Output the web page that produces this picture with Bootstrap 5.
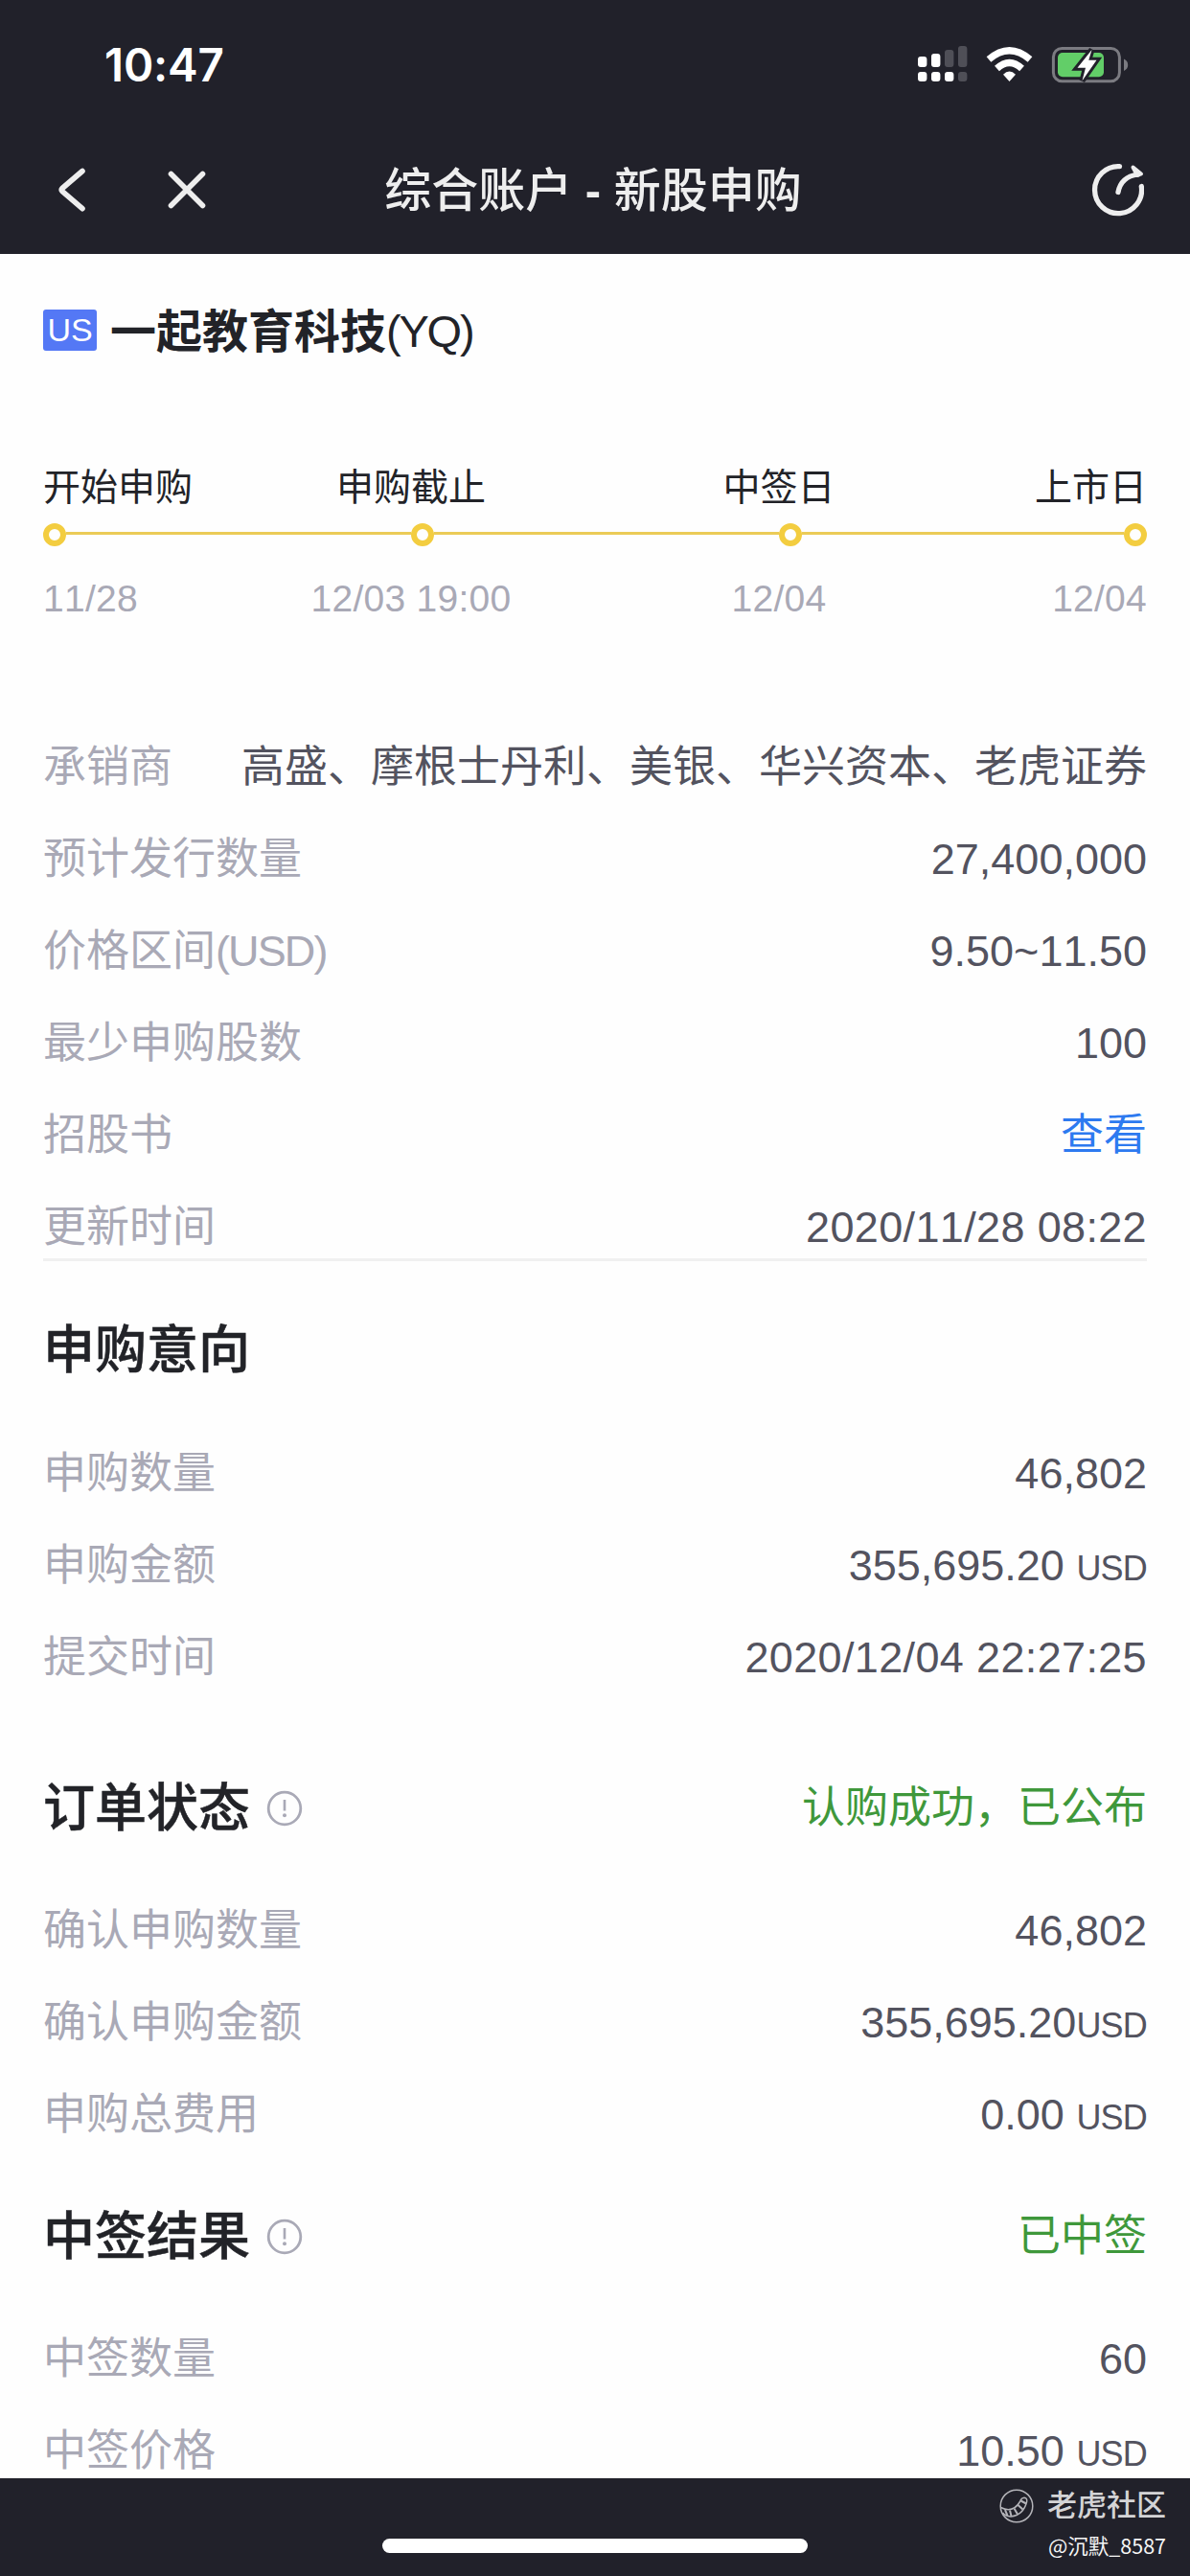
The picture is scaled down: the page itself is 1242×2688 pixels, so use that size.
<!DOCTYPE html>
<html lang="zh-CN">
<head>
<meta charset="utf-8">
<meta name="viewport" content="width=device-width, initial-scale=1">
<title>综合账户 - 新股申购</title>
<link href="https://cdn.jsdelivr.net/npm/bootstrap@5.3.0/dist/css/bootstrap.min.css" rel="stylesheet">
<style>
body{font-family:"Liberation Sans","Noto Sans CJK SC",sans-serif;background:#fefefe;color:#222328;font-kerning:none}
.screen{width:1242px;height:2688px}
.topbar{height:265px;background:#21212a;color:#eee}
.status{height:136px;padding:0 64px 0 109px}
.clock{font:600 47.500px/136px Inter,sans-serif;color:#fff;letter-spacing:-.2px}
.navrow{height:129px;padding:0 48px 5px 44px}
.navtitle{font-size:49px;font-weight:500;line-height:122px;padding-top:2px}
.navside{width:220px}
.back{margin-left:15px}
.sheet{padding:0 45px}
.stock{height:159px;line-height:159px;font-size:48px}
.mkt{width:56px;height:43px;line-height:43px;font-size:34px;background:#5478f5;color:#fff;border-radius:3px;margin-right:14px}
.stock-name{font-weight:700;padding-top:3px}
.sym{letter-spacing:-2.2px;font-size:47px;padding-top:1px}
.steps{margin-top:64px;font-size:39px}
.steps .c1{width:192px}.steps .c2{width:384px}
.steps-label{line-height:40px;padding-top:1px}
.steps-date{line-height:40px;margin-top:35px;color:#a9a9b6;letter-spacing:.25px}
.track{height:24px;margin-top:17px}
.dot{width:24px;height:24px;border:6px solid #f3cd40;border-radius:50%}
.bar{height:3px;background:#ebcb57;margin-bottom:3px}
.bar-full{width:360px}
.kv{height:96px;line-height:96px;font-size:45px;color:#53535f}
.kv dt{font-weight:400;color:#a9a9b6}
.kv dd{margin:0}
.kv .when{letter-spacing:.35px}
.unit{letter-spacing:-1.9px}
.usd{font-size:36px;letter-spacing:-.8px}
.facts{padding-top:108px}
.rule{height:3px;background:#f0f0f0;margin-top:-16px}
.intent{padding-top:52px}.order{padding-top:68px}.result{padding-top:38px}
.rows{padding-top:39px}
.intent .rows{padding-top:40px}
.head{height:82px;line-height:82px}
.head h2{font-size:54px;font-weight:500;line-height:82px;margin:0;-webkit-text-stroke:.5px #222328}
.head .tip{margin-left:17px}
.ok{font-size:45px;color:#3f983b}
.lnk{color:#2d7af0}
.foot{height:102px;background:#21212a;color:#fff}
.home{width:444px;height:15px;border-radius:8px;background:#fff;left:399px;top:63px}
.brand{font-size:31px;font-weight:500;line-height:40px;color:#d4d4d6}
.brand svg{margin-right:14px}
.user{font:400 21.500px/28px "Noto Sans CJK SC",sans-serif;color:#f6f6f6;margin-top:7px}
.wm{padding:9px 25px 0 0}
</style>
<script src="https://cdn.jsdelivr.net/npm/bootstrap@5.3.0/dist/js/bootstrap.bundle.min.js"></script>
</head>
<body>
<div class="screen d-flex flex-column overflow-hidden">
  <header class="topbar flex-shrink-0">
    <div class="status d-flex justify-content-between align-items-center">
      <span class="clock">10:47</span>
      <svg width="222" height="44" viewBox="956 46 222 44">
        <g fill="#fff"><rect x="958" y="59" width="9.4" height="11" rx="3"/><rect x="972" y="56" width="9.4" height="14" rx="3"/><rect x="958" y="75" width="9.4" height="10" rx="3"/><rect x="972" y="75" width="9.4" height="10" rx="3"/><rect x="986" y="75" width="9.4" height="10" rx="3"/></g>
        <g fill="#4f4f57"><rect x="986" y="52" width="9.4" height="18" rx="3"/><rect x="1000" y="48" width="9.4" height="22" rx="3"/><rect x="1000" y="75" width="9.4" height="10" rx="3"/></g>
        <g fill="none" stroke="#fff" stroke-width="7.2"><path d="M1032 62Q1053.500 43.500 1075 62"/><path d="M1040.500 71.500Q1053.500 59.500 1066.500 71.500"/></g>
        <path fill="#fff" d="M1053.500 85l-6.500-7.200q6.500-6.500 13 0z"/>
        <rect x="1099.400" y="50.400" width="69" height="34.400" rx="9" fill="none" stroke="#7b7b81" stroke-width="3"/>
        <path fill="#7b7b81" d="M1173 61.500q4.200 2 4.200 6.200t-4.200 6.200z"/>
        <rect x="1104" y="55" width="48" height="25.200" rx="5" fill="#62ce68"/>
        <path d="M1139.500 52l-15 18.700h8.500l-3.500 13.500 15-21.500h-8.200z" fill="#fff" stroke="#21212a" stroke-width="6" paint-order="stroke"/>
      </svg>
    </div>
    <nav class="navrow d-flex justify-content-between align-items-center">
      <div class="navside d-flex align-items-center">
        <svg class="back" width="160" height="56" viewBox="59 170 160 56" fill="none" stroke="#eee" stroke-width="5.600" stroke-linecap="round" stroke-linejoin="round"><path d="M86 178.500L65 196.500q-1.500 1.600 0 3.200L86 217.700"/><path d="M178.500 181.500l33 33M211.500 181.500l-33 33"/></svg>
      </div>
      <span class="navtitle">综合账户 <b>-</b> 新股申购</span>
      <div class="navside d-flex justify-content-end">
        <svg width="56" height="58" viewBox="1138 169 56 58" fill="none" stroke="#eee" stroke-width="5.300" stroke-linecap="round"><path d="M1168.500 173.700A24.500 24.500 0 1 0 1191.300 194.500"/><path d="M1167 200.500Q1170 184.500 1187.500 182"/><path fill="#eee" stroke-width="4" d="M1182.500 174.500l8.500 7-4 1.500z" stroke-linejoin="round"/></svg>
      </div>
    </nav>
  </header>

  <main class="sheet flex-grow-1 overflow-hidden">
    <div class="stock d-flex align-items-center"><span class="mkt text-center">US</span><span class="stock-name">一起教育科技</span><span class="sym">(YQ)</span></div>

    <section class="steps">
      <div class="steps-label d-flex"><span class="c1">开始申购</span><span class="c2 text-center">申购截止</span><span class="c2 text-center">中签日</span><span class="c1 text-end">上市日</span></div>
      <div class="track d-flex align-items-center"><i class="dot"></i><i class="bar bar-full"></i><i class="dot"></i><i class="bar bar-full"></i><i class="dot"></i><i class="bar flex-fill"></i><i class="dot"></i></div>
      <div class="steps-date d-flex"><span class="c1">11/28</span><span class="c2 text-center">12/03 19:00</span><span class="c2 text-center">12/04</span><span class="c1 text-end">12/04</span></div>
    </section>

    <dl class="facts mb-0">
      <div class="kv d-flex justify-content-between"><dt>承销商</dt><dd>高盛、摩根士丹利、美银、华兴资本、老虎证券</dd></div>
      <div class="kv d-flex justify-content-between"><dt>预计发行数量</dt><dd>27,400,000</dd></div>
      <div class="kv d-flex justify-content-between"><dt>价格区间<span class="unit">(USD)</span></dt><dd>9.50~11.50</dd></div>
      <div class="kv d-flex justify-content-between"><dt>最少申购股数</dt><dd>100</dd></div>
      <div class="kv d-flex justify-content-between"><dt>招股书</dt><dd class="lnk">查看</dd></div>
      <div class="kv d-flex justify-content-between"><dt>更新时间</dt><dd class="when">2020/11/28 08:22</dd></div>
    </dl>
    <div class="rule"></div>

    <section class="intent">
      <div class="head"><h2>申购意向</h2></div>
      <dl class="rows mb-0">
        <div class="kv d-flex justify-content-between"><dt>申购数量</dt><dd>46,802</dd></div>
        <div class="kv d-flex justify-content-between"><dt>申购金额</dt><dd>355,695.20 <span class="usd">USD</span></dd></div>
        <div class="kv d-flex justify-content-between"><dt>提交时间</dt><dd class="when">2020/12/04 22:27:25</dd></div>
      </dl>
    </section>

    <section class="order">
      <div class="head d-flex align-items-center"><h2>订单状态</h2>
        <svg class="tip" width="38" height="38" viewBox="0 0 38 38"><circle cx="19" cy="19" r="16.800" fill="none" stroke="#a9a9b6" stroke-width="2.800"/><path d="M19 10v11.500" stroke="#a9a9b6" stroke-width="2.600"/><circle cx="19" cy="26.300" r="2" fill="#a9a9b6"/></svg>
        <span class="ok ms-auto">认购成功，已公布</span></div>
      <dl class="rows mb-0">
        <div class="kv d-flex justify-content-between"><dt>确认申购数量</dt><dd>46,802</dd></div>
        <div class="kv d-flex justify-content-between"><dt>确认申购金额</dt><dd>355,695.20<span class="usd">USD</span></dd></div>
        <div class="kv d-flex justify-content-between"><dt>申购总费用</dt><dd>0.00 <span class="usd">USD</span></dd></div>
      </dl>
    </section>

    <section class="result">
      <div class="head d-flex align-items-center"><h2>中签结果</h2>
        <svg class="tip" width="38" height="38" viewBox="0 0 38 38"><circle cx="19" cy="19" r="16.800" fill="none" stroke="#a9a9b6" stroke-width="2.800"/><path d="M19 10v11.500" stroke="#a9a9b6" stroke-width="2.600"/><circle cx="19" cy="26.300" r="2" fill="#a9a9b6"/></svg>
        <span class="ok ms-auto">已中签</span></div>
      <dl class="rows mb-0">
        <div class="kv d-flex justify-content-between"><dt>中签数量</dt><dd>60</dd></div>
        <div class="kv d-flex justify-content-between"><dt>中签价格</dt><dd>10.50 <span class="usd">USD</span></dd></div>
      </dl>
    </section>
  </main>

  <footer class="foot flex-shrink-0 position-relative">
    <div class="home position-absolute"></div>
    <div class="wm d-flex flex-column align-items-end">
      <div class="brand d-flex align-items-center">
        <svg width="36" height="36" viewBox="0 0 36 36" fill="none" stroke="#b4b4b9" stroke-width="1.500"><circle cx="18" cy="18" r="16.800"/><path d="M1.500 19.500Q14 26 21.500 13.500q1.500-4 4.500-4.200 3.500.2 2.600 4.500Q25 27.500 12 29 6 28.500 3.500 25"/><path d="M6 22l2.500 6M11 22.500l1.500 6M15.500 20.500l3.500 6M19.500 17l5 4.500M22.500 12.500l5.500 3" stroke-width="2"/></svg>
        <span>老虎社区</span>
      </div>
      <div class="user">@沉默_8587</div>
    </div>
  </footer>
</div>
</body>
</html>
